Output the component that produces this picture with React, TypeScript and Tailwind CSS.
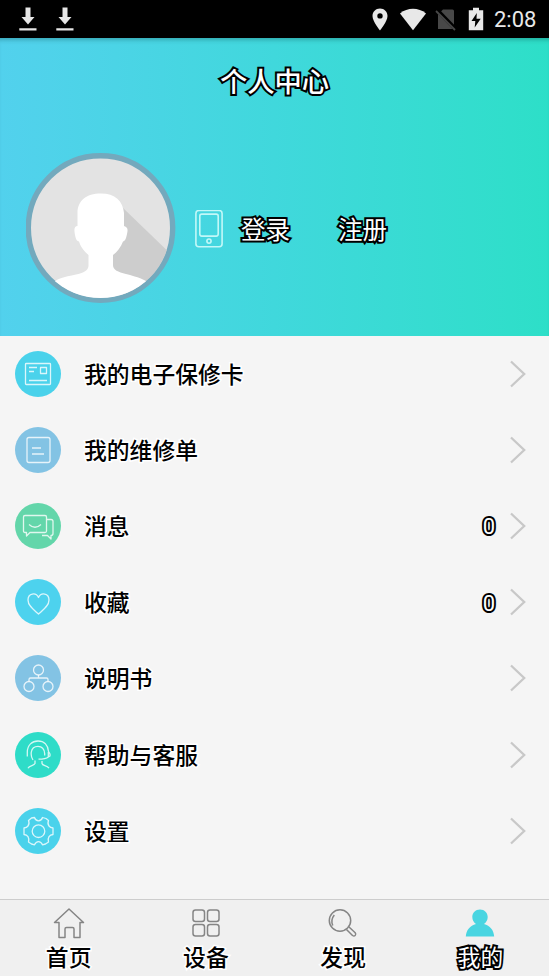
import React from "react";

const FONT = "font-['Roboto','Noto_Sans_CJK_SC',sans-serif]";
const OUTLINE = "text-white [-webkit-text-stroke:4px_#000] [paint-order:stroke_fill] [stroke-linejoin:round]";
const HALO = "text-black [-webkit-text-stroke:3px_#fff] [paint-order:stroke_fill] [stroke-linejoin:round]";

function Download() {
  return (
    <svg width="18" height="24" viewBox="0 0 18 24" fill="#e6e6e6">
      <path d="M6.500 .5h5v9.500h4L9 17.500 2.500 10h4zM.3 21.300h17.200v2.300H.3z" />
    </svg>
  );
}

function StatusBar() {
  return (
    <div className="flex h-[38px] shrink-0 items-center bg-black pl-[19px] pr-[13px]">
      <div className="flex gap-[18.500px]">
        <Download />
        <Download />
      </div>
      <svg className="ml-auto" width="16" height="23" viewBox="0 0 16 23" fill="#e8e8e8">
        <path fillRule="evenodd" d="M8 .5C3.700.5.500 3.700.500 8 .500 13.500 8 22.500 8 22.500S15.500 13.500 15.500 8C15.500 3.700 12.300.5 8 .5Zm0 4.700a2.700 2.700 0 1 1 0 5.400 2.700 2.700 0 0 1 0-5.400Z" />
      </svg>
      <svg className="ml-[11px]" width="28" height="23" viewBox="0 0 28 23" fill="#e8e8e8">
        <path d="M1 5.500C8.500-.7 19.500-.7 27 5.500L14 22.300z" />
      </svg>
      <svg className="ml-[8px]" width="22" height="23" viewBox="0 0 22 23">
        <path d="M8 1.500h9.500q1.500 0 1.500 1.500v18H3V6.500z" fill="#484848" />
        <path d="M1.500 1.500 21 21.500" stroke="#000" strokeWidth="4" />
        <path d="M1 3 20 22" stroke="#484848" strokeWidth="1.800" />
      </svg>
      <svg className="ml-[11px]" width="16" height="24" viewBox="0 0 16 24">
        <path d="M5 .8h6v2.400h4.200v20H.800v-20H5z" fill="#e8e8e8" />
        <path d="M8.800 6 3.500 14h3.800l-.6 6.500L12.700 11.800H8.500z" fill="#000" />
      </svg>
      <span className={`ml-[10px] w-[42px] whitespace-nowrap pt-[2px] text-[22px] leading-none text-[#e8e8e8] ${FONT}`}>2:08</span>
    </div>
  );
}

function Avatar() {
  return (
    <svg width="150" height="152" viewBox="0 0 150 152">
      <defs>
        <clipPath id="face">
          <circle cx="74.500" cy="75" r="70" />
        </clipPath>
      </defs>
      <circle cx="74.500" cy="75" r="72.200" fill="#e3e3e3" stroke="#73a9bd" strokeWidth="5.400" />
      <g clipPath="url(#face)">
        <path d="M96 54 150 106V152H100L84 112z" fill="#cdcdcd" />
        <path
          d="M75 40.500C60 40.500 51.500 48 51.500 60V73C48 73 48 77 49 82 50 87 51 88 53 88.500 55 95 59 99 62.500 102V113C62 118 57 120 50 121.500 38 124 30 125 24 133V152H126V133C120 126 111 124 100 121 92 119 87 117 87 112V102C91 99 95 94 97 88.500 99 88 100 86 101 81 102 77 102 74 98 73V60C97 48 89 40.500 75 40.500Z"
          fill="#fff"
        />
      </g>
    </svg>
  );
}

function Header() {
  return (
    <header className="h-[297.500px] shrink-0 bg-linear-to-r from-[#52d1ed] via-[#40d8dc] to-[#2ddfc8] shadow-[inset_0_5px_4px_-3px_rgba(0,60,60,0.3)]">
      <h1 className={`pt-[27px] text-center text-[27.300px] font-medium leading-[36px] ${FONT} ${OUTLINE}`}>个人中心</h1>
      <div className="flex items-center pl-[26px] pt-[52px]">
        <Avatar />
        <svg className="ml-[19px]" width="28" height="38" viewBox="0 0 28 38" fill="none" stroke="#c2f8f8" strokeWidth="1.600">
          <rect x=".9" y=".5" width="26.200" height="36.200" rx="3" />
          <rect x="4.800" y="4.100" width="18.400" height="22" rx="2" />
          <circle cx="14" cy="31.100" r="2.100" />
        </svg>
        <span className={`ml-[18px] pt-[3px] text-[24.500px] leading-[36px] ${FONT} ${OUTLINE}`}>登录</span>
        <span className={`ml-[48px] pt-[3px] text-[24.500px] leading-[36px] ${FONT} ${OUTLINE}`}>注册</span>
      </div>
    </header>
  );
}

const rows = [
  {
    label: "我的电子保修卡",
    color: "bg-[#4ad2eb]",
    icon: (
      <>
        <rect x="10.500" y="12.500" width="25" height="21" rx=".8" />
        <path d="M14 16.500h8M14 20.500h5M14 29.500h18M25.500 16.500h6v6h-6z" />
      </>
    ),
  },
  {
    label: "我的维修单",
    color: "bg-[#83c3e4]",
    icon: (
      <>
        <rect x="12" y="10.500" width="23" height="25" rx="2" />
        <path d="M17 21h9M17 27h12" />
      </>
    ),
  },
  {
    label: "消息",
    color: "bg-[#63d6aa]",
    count: "0",
    icon: (
      <path d="M10 12.500h20q1.500 0 1.500 1.500v14q0 1.500-1.500 1.500H15L11.500 33v-3.500H10q-1.500 0-1.500-1.500V14q0-1.500 1.500-1.500ZM14 21.500q6 5.500 12 0M31.500 16.500H36q2 0 2 2v12q0 2-2 2v3.500L32.500 32.500H27" />
    ),
  },
  {
    label: "收藏",
    color: "bg-[#4dd2ee]",
    count: "0",
    icon: <path d="M23.500 35C19 31 13 27 13 21 13 14 21 13 23.500 18.500 26 13 34 14 34 21 34 27 28 31 23.500 35Z" />,
  },
  {
    label: "说明书",
    color: "bg-[#83c3e4]",
    icon: (
      <>
        <circle cx="23.500" cy="15" r="5" />
        <circle cx="14" cy="31.500" r="5" />
        <circle cx="33" cy="31.500" r="5" />
        <path d="M23.500 20v3M14 26.500v-2q0-1.500 1.500-1.500h16q1.500 0 1.500 1.500v2" />
      </>
    ),
  },
  {
    label: "帮助与客服",
    color: "bg-[#2edcc8]",
    icon: (
      <path d="M12.300 24.500V20C12.500 13 17 9 23 9 29 9 33 13 33.500 19.500L35 22v2L33.300 25C31 27 28 27.200 23.500 27.200M33.300 20v5M18 28C16 25 16 22 16.300 20 17 16 20 14.300 23 14.300 27 14.300 29.300 17 29.700 21.500V23.500M20 28.500V31.500C19 34 14.500 33 13 36.200M27 29V31.500C27.500 34 32 33 34 36.200" />
    ),
  },
  {
    label: "设置",
    color: "bg-[#4ad2eb]",
    icon: (
      <>
        <path d="M16.500 10 19.500 9.500C20.300 12 21.300 12.800 23.500 12.800S26.700 12 27.500 9.500L31 10.500 33.500 12.500C32.500 15 32.800 16.500 34 18 35 19.300 36.300 19.800 38 20V26.500C36 26.700 35 27.300 34 28.700 33 30.300 32.800 31.500 33.500 34L30.500 36 27.500 36.800C26.500 34.500 25.500 33.600 23.500 33.600S20.500 34.500 19.500 36.800L16.500 36 13.500 34C14.200 31.500 14 30.300 13 28.700 12 27.300 11 26.700 9 26.500V20C10.700 19.800 12 19.300 13 18 14.200 16.500 14.500 15 13.500 12.500Z" />
        <circle cx="23.500" cy="23.200" r="6.300" />
      </>
    ),
  },
];

function Menu() {
  return (
    <main className="flex-1 bg-[#f5f5f5]">
      {rows.map((row) => (
        <div key={row.label} className="flex h-[76.200px] items-center pl-[15px] pr-[23px]">
          <div className={`size-[46px] rounded-full ${row.color}`}>
            <svg width="46" height="46" viewBox="0 0 46 46" fill="none" stroke="#fff" strokeOpacity=".8" strokeWidth="1.300" strokeLinejoin="round">
              {row.icon}
            </svg>
          </div>
          <span className={`ml-[23px] pt-[4px] text-[22.800px] font-medium leading-[34px] ${FONT} ${HALO}`}>{row.label}</span>
          <span className={`ml-auto mr-[15px] pt-[3px] text-[22px] leading-none ${FONT} ${OUTLINE}`}>{row.count}</span>
          <svg width="16" height="28" viewBox="0 0 16 28" fill="none" stroke="#c8c8c8" strokeWidth="2.300">
            <path d="M1 1.500 14.200 14 1 26.500" />
          </svg>
        </div>
      ))}
    </main>
  );
}

const tabs = [
  {
    label: "首页",
    icon: <path d="M16 2 30.500 15.500H27V30.500H21V22q0-1.500-1.500-1.500h-6Q12 20.500 12 22v8.500H6V15.500H1.500Z" />,
  },
  {
    label: "设备",
    icon: (
      <>
        <rect x="3" y="3" width="11.500" height="11.500" rx="2.500" />
        <rect x="17.500" y="3" width="11.500" height="11.500" rx="2.500" />
        <rect x="3" y="17.500" width="11.500" height="11.500" rx="2.500" />
        <rect x="17.500" y="17.500" width="11.500" height="11.500" rx="2.500" />
      </>
    ),
  },
  {
    label: "发现",
    icon: (
      <>
        <circle cx="13" cy="13.500" r="10.700" />
        <path d="M5.800 18.500q-2.500-5.500 1.500-10.500M19.500 22.500 25.500 28.500q1.500 1 2.700 0t0-2.700L22 20" />
      </>
    ),
  },
  {
    label: "我的",
    active: true,
    icon: (
      <path stroke="none" fill="#49d5e1" d="M16 2.500c-4.500 0-7.700 3.200-7.700 7.500 0 3 1.500 5.500 3.700 7C6 18.500 2.300 23 1.800 29.500H30.200C29.700 23 26 18.500 20 17c2.200-1.500 3.700-4 3.700-7 0-4.300-3.200-7.500-7.700-7.500Z" />
    ),
  },
];

function TabBar() {
  return (
    <nav className="grid h-[77px] shrink-0 grid-cols-4 border-t border-[#cdcdcd] bg-[#f0f0f0]">
      {tabs.map((tab) => (
        <div key={tab.label} className="flex flex-col items-center pt-[7px]">
          <svg className="shrink-0" width="32" height="32" viewBox="0 0 32 32" fill="none" stroke="#858585" strokeWidth="1.500" strokeLinejoin="round">
            {tab.icon}
          </svg>
          <span className={`mt-[3px] text-[22.800px] leading-[34px] ${FONT} ${tab.active ? OUTLINE : `font-medium ${HALO}`}`}>{tab.label}</span>
        </div>
      ))}
    </nav>
  );
}

export default function App() {
  return (
    <div className="flex h-[976px] w-[549px] flex-col overflow-hidden">
      <StatusBar />
      <Header />
      <Menu />
      <TabBar />
    </div>
  );
}
